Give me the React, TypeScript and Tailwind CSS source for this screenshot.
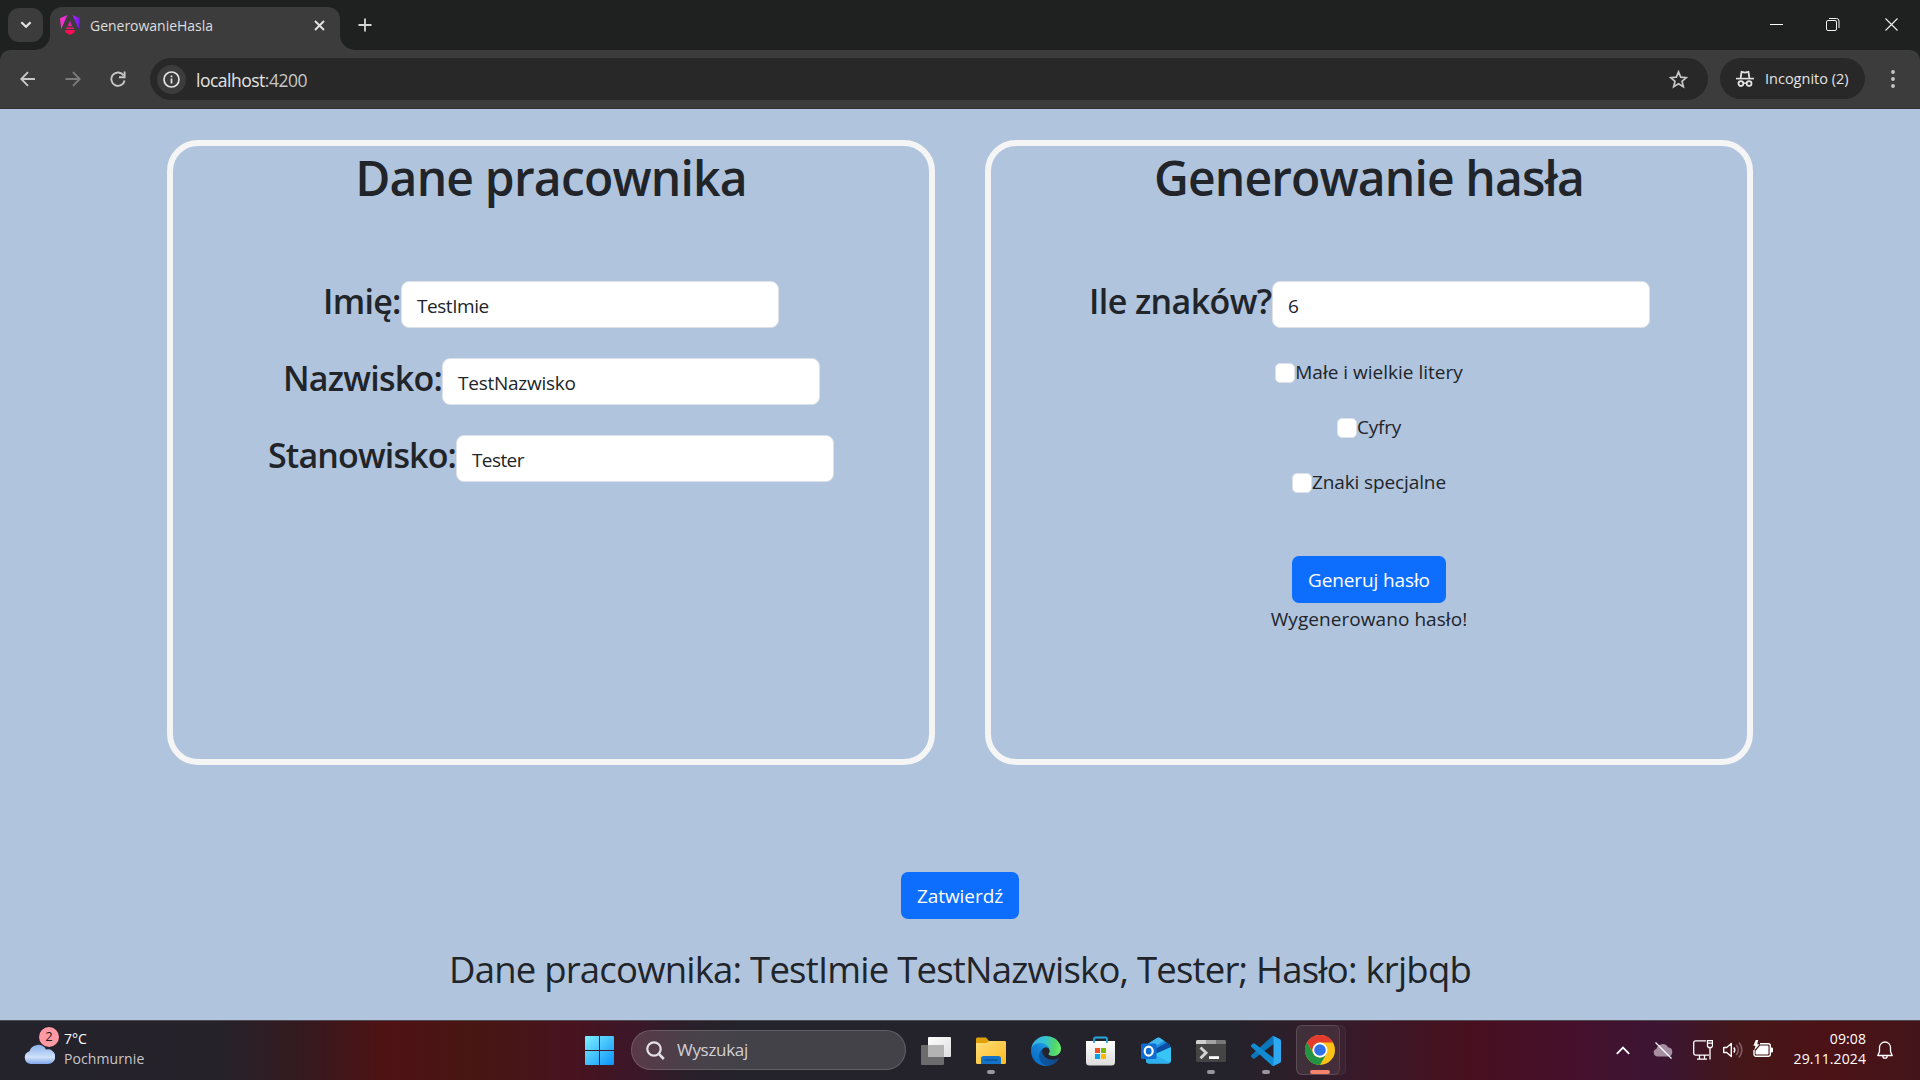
import type { ReactNode } from "react";

function AngularLogo() {
  return (
    <svg width="20" height="20" viewBox="0 0 20 20" fill="none">
      <defs>
        <linearGradient id="ngA" x1="0" y1="0" x2="20" y2="0" gradientUnits="userSpaceOnUse">
          <stop offset="0" stopColor="#fb32c6" />
          <stop offset="0.5" stopColor="#e02ade" />
          <stop offset="0.7" stopColor="#a224f4" />
          <stop offset="1" stopColor="#6c14f5" />
        </linearGradient>
        <linearGradient id="ngB" x1="0" y1="0" x2="0" y2="20" gradientUnits="userSpaceOnUse">
          <stop offset="0.2" stopColor="#b02ae0" />
          <stop offset="0.6" stopColor="#f01c80" />
          <stop offset="0.9" stopColor="#ff1744" />
        </linearGradient>
      </defs>
      <path d="M7.500 0 1.200 14 0 3.200ZM12.500 0l6.300 14L20 3.200Z" fill="url(#ngA)" />
      <path d="m10 5.600 2.300 5.600H7.700ZM6.600 12.600h6.800l.7 1.400H5.900Z" fill="url(#ngB)" />
      <path d="M5.200 15h9.600l-.4 2.400L10 20l-4.400-2.600Z" fill="#ff0b56" />
    </svg>
  );
}

function TabStrip() {
  return (
    <div className="flex h-[50px] bg-[#1f2120] pl-2">
      <div className="mt-2 flex h-[34px] w-[35px] items-center justify-center rounded-[11px] bg-[#3c3c3c]">
        <svg width="12" height="8" viewBox="0 0 12 8" fill="none" stroke="#e3e3e3" strokeWidth="2.2">
          <path d="m1.4 1.2 4.6 4.6 4.6-4.6" />
        </svg>
      </div>
      <div className="flex w-[320px] items-end pt-[7px] -ml-2">
        <svg width="15" height="15" viewBox="0 0 15 15" className="shrink-0">
          <path d="M15 0v15H0A15 15 0 0 0 15 0" fill="#3c3c3c" />
        </svg>
        <div className="flex h-full w-[290px] shrink-0 items-center rounded-t-[12px] bg-[#3c3c3c] pl-[10px] pb-[7px]">
          <AngularLogo />
          <span className="ml-[10px] text-[14px] tracking-[-0.02px] text-[#dedede]">GenerowanieHasla</span>
          <svg className="mr-[15px] ml-auto" width="11" height="11" viewBox="0 0 11 11" stroke="#e3e3e3" strokeWidth="1.9">
            <path d="m1 1 9 9M10 1l-9 9" />
          </svg>
        </div>
        <svg width="15" height="15" viewBox="0 0 15 15" className="shrink-0">
          <path d="M0 0v15h15A15 15 0 0 1 0 0" fill="#3c3c3c" />
        </svg>
      </div>
      <svg className="mt-[18px] ml-[3px]" width="14" height="14" viewBox="0 0 14 14" stroke="#d5d5d5" strokeWidth="1.8">
        <path d="M7 .5v13M.5 7h13" />
      </svg>
      <div className="mr-[22px] ml-auto flex items-start gap-[43px] pt-[18px]">
        <svg width="13" height="13" viewBox="0 0 13 13" stroke="#fff">
          <path d="M0 6.5h13" />
        </svg>
        <svg width="14" height="13" viewBox="0 0 14 13" fill="none" stroke="#f0f0f0">
          <rect x=".5" y="2.5" width="10" height="10" rx="1.5" />
          <path d="M3 .5h7.5a2.5 2.5 0 0 1 2.5 2.5V10" />
        </svg>
        <svg className="ml-[2px]" width="13" height="13" viewBox="0 0 13 13" stroke="#f0f0f0" strokeWidth="1.1">
          <path d="m.5.5 12 12M12.5.5l-12 12" />
        </svg>
      </div>
    </div>
  );
}

function Toolbar() {
  return (
    <div className="bg-[#1f2120]">
      <div className="flex h-[59px] items-start rounded-t-[10px] border-b border-[#343434] bg-[#3c3c3c] pt-2 pl-5">
        <div className="flex h-[42px] w-[130px] items-center gap-[29px]">
          <svg width="16" height="16" viewBox="0 0 16 16" fill="none" stroke="#c7c7c7" strokeWidth="1.9">
            <path d="M15 8H1.5M8 1.2 1.3 8 8 14.8" />
          </svg>
          <svg width="16" height="16" viewBox="0 0 16 16" fill="none" stroke="#7c7c7c" strokeWidth="1.9">
            <path d="M.5 8h14M8 1.2 14.7 8 8 14.8" />
          </svg>
          <svg width="16" height="16" viewBox="0 0 16 16" fill="none" stroke="#c7c7c7" strokeWidth="1.9">
            <path d="M13.6 4.4A6.7 6.7 0 1 0 14.6 9.5" />
            <path d="M14.6.6v5.6H9" />
          </svg>
        </div>
        <div className="flex h-[42px] w-[1558px] items-center rounded-full bg-[#282828] pr-5 pl-[7px]">
          <div className="flex size-[29px] items-center justify-center rounded-full bg-[#3c3c3c]">
            <svg width="17" height="17" viewBox="0 0 17 17" fill="none" stroke="#e3e3e3" strokeWidth="1.7">
              <circle cx="8.5" cy="8.5" r="7.5" />
              <path d="M8.5 7.6v4.8M8.5 4.5v1.8" />
            </svg>
          </div>
          <span className="ml-[10px] pt-[2px] text-[17.5px] tracking-[-0.5px] text-[#e3e3e3]">
            localhost<span className="text-[#c7c7c7]">:4200</span>
          </span>
          <svg className="ml-auto" width="19" height="19" viewBox="0 0 20 20" fill="none" stroke="#c7c7c7" strokeWidth="1.8">
            <path d="m10 2 2.3 5.5 6 .5-4.6 3.9 1.4 5.8L10 14.6l-5.1 3.1 1.4-5.8L1.700 8l6-.5Z" />
          </svg>
        </div>
        <div className="ml-3 flex h-[41px] w-[145px] items-center rounded-full bg-[#282828] pl-4">
          <svg width="18" height="18" viewBox="0 0 18 18" fill="none" stroke="#e3e3e3">
            <path d="M0 8.6h18" strokeWidth="1.6" />
            <path d="m4.600 8 1-6.200 3.400.8 3.400-.8 1 6.200" strokeWidth="1.8" />
            <circle cx="4.900" cy="13.600" r="2.400" strokeWidth="1.800" />
            <circle cx="13.100" cy="13.600" r="2.400" strokeWidth="1.800" />
            <path d="M7.200 13.200h3.600" strokeWidth="1.500" />
          </svg>
          <span className="ml-[11px] text-[14.5px] whitespace-nowrap text-[#e3e3e3]">Incognito (2)</span>
        </div>
        <svg className="mt-[12px] ml-[25.5px]" width="4" height="18" viewBox="0 0 4 18" fill="#c7c7c7">
          <circle cx="2" cy="2" r="1.9" />
          <circle cx="2" cy="9" r="1.9" />
          <circle cx="2" cy="16" r="1.9" />
        </svg>
      </div>
    </div>
  );
}

function Panel({ title, children }: { title: ReactNode; children: ReactNode }) {
  return (
    <section className="flex h-[625px] w-[768px] flex-col items-center rounded-[31px] border-6 border-[#f5f5f5]">
      <h1 className="mt-[2px] h-[60px] text-[48px] leading-[60px] font-semibold">{title}</h1>
      <div className="mt-[73px] flex flex-col items-center">{children}</div>
    </section>
  );
}

function Field({ label, labelClass, value }: { label: string; labelClass: string; value: ReactNode }) {
  return (
    <div className="mb-[30px] flex h-[47px] items-start">
      <label className={"h-[40px] text-[34px] leading-[40px] font-semibold whitespace-nowrap " + labelClass}>{label}</label>
      <div className="flex h-[47px] w-[378px] items-center rounded-[8px] border border-[#dee2e6] bg-white pt-[4px] pl-[15px] text-[19px]">
        {value}
      </div>
    </div>
  );
}

function Check({ children }: { children: ReactNode }) {
  return (
    <div className="mb-[25px] flex h-[30px] items-center">
      <div className="size-5 rounded-[5px] border border-[#dee2e6] bg-white" />
      <span className="h-[30px] text-[19px] leading-[29px]">{children}</span>
    </div>
  );
}

function Cell({ children, dot }: { children: ReactNode; dot?: boolean }) {
  return (
    <div className="flex h-[59px] w-[55px] flex-col items-center pt-[14px]">
      <div className="flex h-[31px] w-[30px] items-center justify-center">{children}</div>
      {dot && <div className="mt-[4px] h-[4px] w-[8px] rounded-full bg-[#98959b]" />}
    </div>
  );
}

function Explorer() {
  return (
    <svg width="30" height="28" viewBox="0 0 30 28">
      <defs>
        <linearGradient id="fo" x1="0" y1="0" x2="1" y2="1">
          <stop offset="0" stopColor="#ffdd77" />
          <stop offset="1" stopColor="#fdbb22" />
        </linearGradient>
      </defs>
      <path d="M0 2a1.500 1.500 0 0 1 1.500-1.500H10l3 3.500h15.500A1.500 1.500 0 0 1 30 5.500V9H0Z" fill="#e0a008" />
      <path d="M0 6h10.500l2.500-2h15.500A1.500 1.500 0 0 1 30 5.500V25.500A1.500 1.500 0 0 1 28.500 27h-27A1.500 1.500 0 0 1 0 25.500Z" fill="url(#fo)" />
      <path d="M5 27v-5.500a2.500 2.500 0 0 1 2.500-2.500h15a2.500 2.500 0 0 1 2.500 2.500V27Z" fill="#1273c9" />
      <path d="M8.500 23h13" stroke="#0b4c92" strokeWidth="1.200" />
    </svg>
  );
}

function Edge() {
  return (
    <svg width="30" height="30" viewBox="0 0 256 256">
      <defs>
        <linearGradient id="e1" x1="58" y1="177" x2="237" y2="177" gradientUnits="userSpaceOnUse">
          <stop offset="0" stopColor="#0c59a4" />
          <stop offset="1" stopColor="#114a8b" />
        </linearGradient>
        <linearGradient id="e2" x1="150" y1="95" x2="42" y2="220" gradientUnits="userSpaceOnUse">
          <stop offset="0" stopColor="#1b9de2" />
          <stop offset="0.4" stopColor="#1382d6" />
          <stop offset="1" stopColor="#0a6fc8" />
        </linearGradient>
        <linearGradient id="e3" x1="10" y1="60" x2="250" y2="100" gradientUnits="userSpaceOnUse">
          <stop offset="0" stopColor="#35b0ea" />
          <stop offset="0.450" stopColor="#36c4cf" />
          <stop offset="0.800" stopColor="#52d668" />
          <stop offset="1" stopColor="#66eb6e" />
        </linearGradient>
      </defs>
      <path fill="url(#e1)" d="M231 190.500c-3.400 1.800-6.900 3.400-10.500 4.700a101.700 101.700 0 0 1-35.900 6.500c-47.300 0-88.500-32.500-88.500-74.300.1-11.400 6.400-21.900 16.400-27.300-42.800 1.800-53.800 46.400-53.800 72.500 0 73.900 68.100 81.400 82.800 81.400 7.900 0 19.800-2.300 27-4.600l1.300-.4a128.300 128.300 0 0 0 66.600-52.800 4 4 0 0 0-5.400-5.700Z" />
      <path fill="url(#e2)" d="M105.700 241.400a79.200 79.200 0 0 1-22.700-21.300 80.700 80.700 0 0 1 29.500-120c3.100-1.500 8.500-4.100 15.600-4a32.400 32.400 0 0 1 25.700 13 31.900 31.900 0 0 1 6.300 18.700c0-.2 24.500-79.600-80-79.600-43.900 0-80 41.700-80 78.200a130.200 130.200 0 0 0 12.100 56 128 128 0 0 0 156.400 67 75.500 75.500 0 0 1-62.800-8Z" />
      <path fill="url(#e3)" d="M152.300 148.900c-.9 1-3.400 2.500-3.400 5.600 0 2.600 1.700 5.200 4.800 7.300 14.300 10 41.400 8.600 41.500 8.600 10.700 0 21.100-2.900 30.300-8.300A61.400 61.400 0 0 0 256 109.200c.3-22.400-8-37.300-11.300-43.900C223.500 23.900 177.700 0 128 0A128 128 0 0 0 0 126.200c.5-36.500 36.800-66 80-66 3.500 0 23.500.3 42 10 16.300 8.600 24.900 18.900 30.800 29.200 6.200 10.700 7.300 24.100 7.300 29.500 0 5.300-2.700 13.300-7.800 20Z" />
    </svg>
  );
}

function Store() {
  return (
    <svg width="29" height="30" viewBox="0 0 29 30">
      <defs>
        <linearGradient id="st" x1="0" y1="0" x2="0" y2="1">
          <stop offset="0" stopColor="#ffffff" />
          <stop offset="1" stopColor="#dcdcdc" />
        </linearGradient>
      </defs>
      <path d="M0 5h29v21a3.500 3.500 0 0 1-3.500 3.500h-22A3.500 3.500 0 0 1 0 26Z" fill="url(#st)" />
      <path d="M8 7V2.500A1.500 1.500 0 0 1 9.500 1.500h10A1.500 1.500 0 0 1 21 2.500V7" fill="none" stroke="#24a9dc" strokeWidth="1.800" />
      <path d="M9 12h5v5H9Z" fill="#f25022" />
      <path d="M15 12h5v5h-5Z" fill="#7fba00" />
      <path d="M9 18h5v5H9Z" fill="#00a4ef" />
      <path d="M15 18h5v5h-5Z" fill="#ffb900" />
    </svg>
  );
}

function Outlook() {
  return (
    <svg width="30" height="27" viewBox="0 0 30 27">
      <path d="M5 8 16 1Q17.500 0 19 1l10 7v6L16 20 5 16Z" fill="#1a8fe0" />
      <path d="M5 8 16 1Q17.500 0 19 1l4 2.800L10 12Z" fill="#42b8ee" />
      <path d="M12 13 26 5.500l3.500 3v4L18 20Z" fill="#0a4da3" />
      <path d="M30 10v13.500a3 3 0 0 1-3 3H8a3 3 0 0 1-3-3V21Z" fill="#36c5f4" />
      <path d="M5 20l9-2 15 7.500a3 3 0 0 1-2 1H8a3 3 0 0 1-3-3Z" fill="#2fb0ec" />
      <rect x="0" y="6.500" width="15.500" height="15.500" rx="1.500" fill="#0f6cd0" />
      <ellipse cx="7.700" cy="14.200" rx="4" ry="4.500" fill="none" stroke="#fff" strokeWidth="2.200" />
    </svg>
  );
}

function Terminal() {
  return (
    <svg width="30" height="22" viewBox="0 0 30 22">
      <rect width="30" height="22" rx="1.500" fill="#454545" />
      <path d="M0 4V1.500A1.500 1.500 0 0 1 1.500 0H10v4Z" fill="#d0d0d0" />
      <path d="M10 0h10v4H10Z" fill="#a2a2a2" />
      <path d="M20 0h8.500A1.500 1.500 0 0 1 30 1.500V4H20Z" fill="#777" />
      <path d="m4.500 7.500 5.500 5.300-5.500 5.400" fill="none" stroke="#d2d2d2" strokeWidth="2.900" />
      <path d="M13 16.200h10V19H13Z" fill="#fff" />
    </svg>
  );
}

function VsCode() {
  return (
    <svg width="30" height="30" viewBox="0 0 100 100">
      <path fill="#0b76ba" d="M96.500 10.800 75.900.9a6.200 6.200 0 0 0-7.100 1.200L1.300 63.600a4.200 4.200 0 0 0 0 6.200l5.500 5a4.200 4.200 0 0 0 5.300.2L93.400 13.400c2.700-2.100 6.600-.1 6.600 3.300v-.3c0-2.400-1.400-4.600-3.500-5.600Z" />
      <path fill="#128bd3" d="m96.500 89.200-20.600 9.900a6.200 6.200 0 0 1-7.100-1.200L1.300 36.400a4.200 4.200 0 0 1 0-6.200l5.500-5a4.200 4.200 0 0 1 5.300-.2l81.300 61.600c2.700 2.100 6.600.1 6.600-3.300v.3c0 2.400-1.400 4.600-3.500 5.600Z" />
      <path fill="#2da8f2" d="M75.900 99.100a6.200 6.200 0 0 1-7.100-1.200c2.300 2.300 6.200.7 6.200-2.600V4.700c0-3.300-3.900-4.900-6.200-2.600A6.200 6.200 0 0 1 75.900.9l20.600 9.900a6.200 6.200 0 0 1 3.500 5.600v67.200c0 2.400-1.400 4.600-3.500 5.600Z" />
    </svg>
  );
}

function Chrome() {
  return (
    <svg width="30" height="30" viewBox="0 0 48 48" className="shrink-0">
      <circle cx="24" cy="24" r="24" fill="#fbc116" />
      <path d="M3.200 12A24 24 0 0 1 44.800 12H24A12 12 0 0 0 13.600 30Z" fill="#e33b2e" />
      <path d="M3.200 12 13.600 30A12 12 0 0 0 34.400 30L24 48A24 24 0 0 1 3.200 12" fill="#229342" />
      <circle cx="24" cy="24" r="12" fill="#fff" />
      <circle cx="24" cy="24" r="9.300" fill="#2f72e8" />
    </svg>
  );
}

function Taskbar() {
  return (
    <footer className="flex h-[60px] border-t border-[#504b50] bg-[linear-gradient(90deg,#24222a_0px,#25222a_220px,#37191e_310px,#4f1214_385px,#471613_480px,#48131f_570px,#3c1728_635px,#29202a_690px,#24222a_740px,#24222a_1240px,#361b2a_1340px,#48101f_1470px,#46102c_1570px,#3b1533_1660px,#451718_1740px,#4c1216_1830px,#42151a_1920px)]">
      <div className="flex w-[572px] pl-[24px]">
        <div className="relative mt-[17px] h-[32px] w-[35px]">
          <svg className="mt-[-5px] ml-[-1px]" width="32" height="32" viewBox="0 0 32 32">
            <defs>
              <linearGradient id="cl" x1="0" y1="0" x2="0" y2="1">
                <stop offset="0" stopColor="#8ab2ec" />
                <stop offset="0.650" stopColor="#cfe0fa" />
                <stop offset="1" stopColor="#7da6ea" />
              </linearGradient>
            </defs>
            <path d="M7.500 31a6.500 6.500 0 0 1-1-12.700A9 9 0 0 1 23 16.500 7.400 7.400 0 1 1 24 31Z" fill="url(#cl)" />
          </svg>
          <span className="absolute top-[-11px] left-[15px] flex size-5 items-center justify-center rounded-full bg-[#ff99a4] text-[13px] text-[#241a1c]">2</span>
        </div>
        <div className="ml-[5px] pt-[8px] text-[14px] leading-[20px]">
          <p className="text-white">7°C</p>
          <p className="tracking-[0.1px] text-[#c9c6cb]">Pochmurnie</p>
        </div>
      </div>
      <Cell>
        <svg width="29" height="29" viewBox="0 0 29 29">
          <defs>
            <linearGradient id="wi" x1="0" y1="0" x2="1" y2="1">
              <stop offset="0" stopColor="#7df0ff" />
              <stop offset="1" stopColor="#0a93fb" />
            </linearGradient>
          </defs>
          <path d="M0 1a1 1 0 0 1 1-1h13v14H0ZM15 0h13a1 1 0 0 1 1 1v13H15ZM0 15h14v14H1a1 1 0 0 1-1-1ZM15 15h14v13a1 1 0 0 1-1 1H15Z" fill="url(#wi)" />
        </svg>
      </Cell>
      <div className="mt-[9px] ml-[4px] flex h-[40px] w-[275px] items-center rounded-full border border-white/15 bg-white/15 pl-[14px]">
        <svg width="19" height="19" viewBox="0 0 19 19" fill="none" stroke="#e4e2e6" strokeWidth="2.200">
          <circle cx="8" cy="8" r="6.700" />
          <path d="m12.600 12.600 5.200 5.400" strokeWidth="2.600" />
        </svg>
        <span className="ml-[12px] text-[17px] tracking-[-0.3px] text-[#d3d0d5]">Wyszukaj</span>
      </div>
      <div className="ml-[2px] flex">
        <Cell>
          <svg width="30" height="28" viewBox="0 0 30 28">
            <defs>
              <linearGradient id="tv" x1="0" y1="0" x2="1" y2="1">
                <stop offset="0" stopColor="#fff" />
                <stop offset="1" stopColor="#dedede" />
              </linearGradient>
            </defs>
            <rect x="0" y="8" width="23" height="20" rx="1" fill="#6c6b6d" />
            <rect x="7" y="0" width="23" height="20" rx="1" fill="url(#tv)" />
            <path d="M7 8h16v12H7Z" fill="#b3b3b3" />
          </svg>
        </Cell>
        <Cell dot><Explorer /></Cell>
        <Cell><Edge /></Cell>
        <Cell><Store /></Cell>
        <Cell><Outlook /></Cell>
        <Cell dot><Terminal /></Cell>
        <Cell dot><VsCode /></Cell>
        <div className="mt-[4px] ml-[3px] flex h-[50px] w-[50px] rounded-[6px] border border-white/5 bg-white/3">
          <div className="-mt-px -ml-px flex h-[50px] w-[44px] flex-col items-center rounded-[6px] border border-white/10 bg-white/5 pt-[9px] pl-[4px]">
            <Chrome />
            <div className="mt-[5px] h-[4px] w-[20px] shrink-0 rounded-full bg-[#f5836b]" />
          </div>
        </div>
      </div>
      <div className="mr-[27px] ml-auto flex h-[58px] items-center text-white">
        <svg width="14" height="9" viewBox="0 0 14 9" fill="none" stroke="#fff" strokeWidth="1.800">
          <path d="m.8 7.800 6.200-6.200 6.200 6.200" />
        </svg>
        <svg className="ml-[23px]" width="20" height="17" viewBox="0 0 20 17">
          <path d="M4.500 14.500a4 4 0 0 1-1-7.800A6.300 6.300 0 0 1 15 5.200a4.700 4.700 0 0 1 .500 9.300Z" fill="#a58da2" />
          <path d="m2.500.5 16 16" stroke="#fff" strokeWidth="1.300" />
        </svg>
        <svg className="ml-[20px]" width="20" height="20" viewBox="0 0 20 20" fill="none" stroke="#fff" strokeWidth="1.300">
          <path d="M13 .9H2.500A1.800 1.800 0 0 0 .7 2.700v10.600a1.800 1.800 0 0 0 1.800 1.800H16M6.500 15.100v3.800M11.500 15.100v3.800M4 19.200h10" />
          <path d="M14.500.7h5v5.500l-1 1.300h-3l-1-1.300Z M14.500 3.200h5M17 7.500V19.500" />
        </svg>
        <svg className="ml-[10px]" width="20" height="18" viewBox="0 0 20 18" fill="none" stroke="#fff" strokeWidth="1.400">
          <path d="M.7 6.500v5h3l4.600 4V2.500l-4.600 4Z" strokeLinejoin="round" />
          <path d="M10.800 6.500a4 4 0 0 1 0 5" />
          <path d="M13.200 4a7 7 0 0 1 0 10M15.800 1.500a11 11 0 0 1 0 15" stroke="#87606c" />
        </svg>
        <svg className="mb-[3px] ml-[10px]" width="20" height="18" viewBox="0 0 20 18">
          <path d="M7 3.700h8.300a2 2 0 0 1 2 2v8.600a2 2 0 0 1-2 2H3a2 2 0 0 1-2-2V10" fill="none" stroke="#fff" strokeWidth="1.400" />
          <path d="M7 5.500h7.500a1 1 0 0 1 1 1v7a1 1 0 0 1-1 1H3.500a1 1 0 0 1-1-1V11ZM18 7.500h.8a1.200 1.200 0 0 1 1.200 1.200v2.600a1.200 1.200 0 0 1-1.200 1.200H18Z" fill="#fff" />
          <path d="M2.800 0 .3 5.800h2.200L1.200 10.500 6.500 4.300H4.200L5.200 0Z" fill="#fff" />
        </svg>
        <div className="ml-[20px] w-[73px] pb-[2px] text-right text-[14px] leading-[20px] tracking-[0.1px] whitespace-nowrap">
          <p>09:08</p>
          <p>29.11.2024</p>
        </div>
        <svg className="ml-[11px]" width="16" height="19" viewBox="0 0 16 19" fill="none" stroke="#fff" strokeWidth="1.300" strokeLinejoin="round">
          <path d="M8 1a5.500 5.500 0 0 0-5.500 5.500v4L.8 14.500h14.400l-1.700-4v-4A5.500 5.500 0 0 0 8 1ZM5.800 15a2.200 2.200 0 0 0 4.400 0" />
        </svg>
      </div>
    </footer>
  );
}

export default function App() {
  return (
    <div className="flex h-[1080px] w-[1920px] flex-col overflow-hidden font-['Open_Sans',sans-serif]">
      <TabStrip />
      <Toolbar />
      <main className="flex h-[911px] flex-col items-center bg-[#b0c4de] pt-[31px] text-[#212529]">
        <div className="flex gap-[50px]">
          <Panel title={<span className="tracking-[-0.8px]">Dane pracownika</span>}>
            <Field label="Imię:" labelClass="w-[78px] tracking-[-0.7px]" value={<span className="tracking-[-0.45px]">TestImie</span>} />
            <Field label="Nazwisko:" labelClass="w-[160px] pl-[1px] tracking-[-0.76px]" value={<span className="tracking-[-0.25px]">TestNazwisko</span>} />
            <Field label="Stanowisko:" labelClass="w-[188px] tracking-[-0.86px]" value={<span className="tracking-[-0.6px]">Tester</span>} />
          </Panel>
          <Panel title={<span className="tracking-[-0.87px]">Generowanie hasła</span>}>
            <Field label="Ile znaków?" labelClass="w-[184px] pl-[1px] tracking-[-0.6px]" value="6" />
            <Check>Małe i wielkie litery</Check>
            <Check><span className="tracking-[-0.2px]">Cyfry</span></Check>
            <Check><span className="tracking-[-0.12px]">Znaki specjalne</span></Check>
            <button className="mt-[33px] h-[47px] w-[154px] rounded-[7px] bg-[#0d6efd] pt-[2px] text-[19px] tracking-[-0.12px] text-white">Generuj hasło</button>
            <p className="h-[30px] text-[19px] leading-[33px] tracking-[0.06px]">Wygenerowano hasło!</p>
          </Panel>
        </div>
        <button className="mt-[107px] h-[47px] w-[118px] rounded-[7px] bg-[#0d6efd] pt-[2px] text-[19px] tracking-[-0.05px] text-white">Zatwierdź</button>
        <p className="mt-[24px] h-[50px] text-[36.5px] leading-[52px] tracking-[-0.79px] whitespace-nowrap">
          Dane pracownika: TestImie TestNazwisko, Tester; Hasło: krjbqb
        </p>
      </main>
      <Taskbar />
    </div>
  );
}
